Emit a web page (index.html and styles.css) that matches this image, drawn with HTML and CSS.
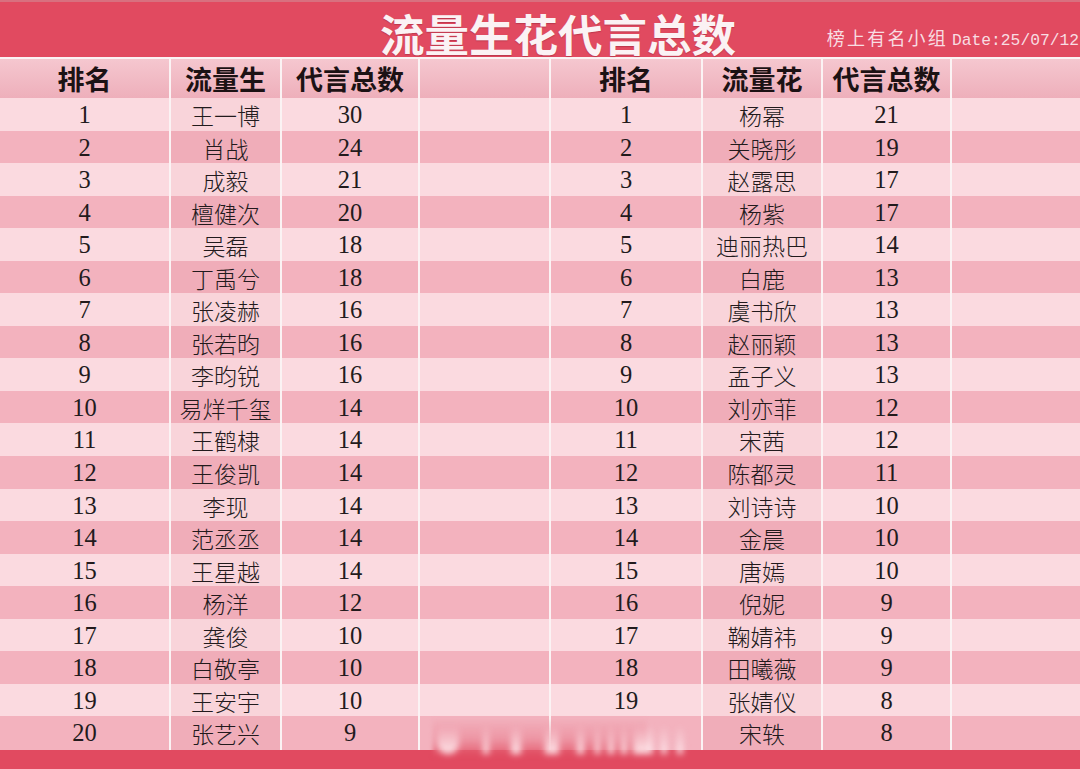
FILE: index.html
```html
<!DOCTYPE html>
<html lang="zh">
<head>
<meta charset="utf-8">
<title>流量生花代言总数</title>
<link rel="stylesheet" href="styles.css">
</head>
<body>
<div class="page">
  <header class="banner">
    <h1 class="title">流量生花代言总数</h1>
    <div class="sub"><span class="sub-cn">榜上有名小组</span> <span class="sub-date">Date:25/07/12</span></div>
  </header>
  <div class="table">
    <div class="row head">
      <div class="c">排名</div><div class="c">流量生</div><div class="c">代言总数</div><div class="c"></div>
      <div class="c">排名</div><div class="c">流量花</div><div class="c">代言总数</div><div class="c"></div>
    </div>
    <div class="row light"><div class="c">1</div><div class="c n">王一博</div><div class="c">30</div><div class="c"></div><div class="c">1</div><div class="c n">杨幂</div><div class="c">21</div><div class="c"></div></div>
    <div class="row dark"><div class="c">2</div><div class="c n">肖战</div><div class="c">24</div><div class="c"></div><div class="c">2</div><div class="c n">关晓彤</div><div class="c">19</div><div class="c"></div></div>
    <div class="row light"><div class="c">3</div><div class="c n">成毅</div><div class="c">21</div><div class="c"></div><div class="c">3</div><div class="c n">赵露思</div><div class="c">17</div><div class="c"></div></div>
    <div class="row dark"><div class="c">4</div><div class="c n">檀健次</div><div class="c">20</div><div class="c"></div><div class="c">4</div><div class="c n">杨紫</div><div class="c">17</div><div class="c"></div></div>
    <div class="row light"><div class="c">5</div><div class="c n">吴磊</div><div class="c">18</div><div class="c"></div><div class="c">5</div><div class="c n">迪丽热巴</div><div class="c">14</div><div class="c"></div></div>
    <div class="row dark"><div class="c">6</div><div class="c n">丁禹兮</div><div class="c">18</div><div class="c"></div><div class="c">6</div><div class="c n">白鹿</div><div class="c">13</div><div class="c"></div></div>
    <div class="row light"><div class="c">7</div><div class="c n">张凌赫</div><div class="c">16</div><div class="c"></div><div class="c">7</div><div class="c n">虞书欣</div><div class="c">13</div><div class="c"></div></div>
    <div class="row dark"><div class="c">8</div><div class="c n">张若昀</div><div class="c">16</div><div class="c"></div><div class="c">8</div><div class="c n">赵丽颖</div><div class="c">13</div><div class="c"></div></div>
    <div class="row light"><div class="c">9</div><div class="c n">李昀锐</div><div class="c">16</div><div class="c"></div><div class="c">9</div><div class="c n">孟子义</div><div class="c">13</div><div class="c"></div></div>
    <div class="row dark"><div class="c">10</div><div class="c n">易烊千玺</div><div class="c">14</div><div class="c"></div><div class="c">10</div><div class="c n">刘亦菲</div><div class="c">12</div><div class="c"></div></div>
    <div class="row light"><div class="c">11</div><div class="c n">王鹤棣</div><div class="c">14</div><div class="c"></div><div class="c">11</div><div class="c n">宋茜</div><div class="c">12</div><div class="c"></div></div>
    <div class="row dark"><div class="c">12</div><div class="c n">王俊凯</div><div class="c">14</div><div class="c"></div><div class="c">12</div><div class="c n">陈都灵</div><div class="c">11</div><div class="c"></div></div>
    <div class="row light"><div class="c">13</div><div class="c n">李现</div><div class="c">14</div><div class="c"></div><div class="c">13</div><div class="c n">刘诗诗</div><div class="c">10</div><div class="c"></div></div>
    <div class="row dark"><div class="c">14</div><div class="c n">范丞丞</div><div class="c">14</div><div class="c"></div><div class="c">14</div><div class="c n">金晨</div><div class="c">10</div><div class="c"></div></div>
    <div class="row light"><div class="c">15</div><div class="c n">王星越</div><div class="c">14</div><div class="c"></div><div class="c">15</div><div class="c n">唐嫣</div><div class="c">10</div><div class="c"></div></div>
    <div class="row dark"><div class="c">16</div><div class="c n">杨洋</div><div class="c">12</div><div class="c"></div><div class="c">16</div><div class="c n">倪妮</div><div class="c">9</div><div class="c"></div></div>
    <div class="row light"><div class="c">17</div><div class="c n">龚俊</div><div class="c">10</div><div class="c"></div><div class="c">17</div><div class="c n">鞠婧祎</div><div class="c">9</div><div class="c"></div></div>
    <div class="row dark"><div class="c">18</div><div class="c n">白敬亭</div><div class="c">10</div><div class="c"></div><div class="c">18</div><div class="c n">田曦薇</div><div class="c">9</div><div class="c"></div></div>
    <div class="row light"><div class="c">19</div><div class="c n">王安宇</div><div class="c">10</div><div class="c"></div><div class="c">19</div><div class="c n">张婧仪</div><div class="c">8</div><div class="c"></div></div>
    <div class="row dark"><div class="c">20</div><div class="c n">张艺兴</div><div class="c">9</div><div class="c"></div><div class="c"></div><div class="c n">宋轶</div><div class="c">8</div><div class="c"></div></div>
  </div>
  <footer class="footer"></footer>
  <div class="watermark">
    <span class="wm-bar b1"></span><span class="wm-bar b2"></span><span class="wm-bar b3"></span>
    <span class="wm-bar b4"></span><span class="wm-bar b5"></span><span class="wm-bar b6"></span>
    <span class="wm-bar b7"></span><span class="wm-bar b8"></span><span class="wm-bar b9"></span>
    <span class="wm-bar b10"></span><span class="wm-bar b11"></span>
  </div>
</div>
</body>
</html>
```

FILE: styles.css
```css
* { box-sizing: border-box; margin: 0; padding: 0; }
html, body { width: 1080px; height: 769px; overflow: hidden; background: #fff; }
body { font-family: "Liberation Serif", "Noto Sans CJK SC", serif; color: #221a1c; }

.page { position: relative; width: 1080px; height: 769px; display: flex; flex-direction: column; background: #fbf3f4; }

.banner {
  height: 57px;
  background: #e14a60;
  border-top: 2px solid #d8707f;
  display: flex;
  align-items: flex-end;
}
.title {
  margin-left: 380px;
  font-family: "Noto Sans CJK SC", sans-serif;
  font-weight: 700;
  font-size: 44.5px;
  line-height: 48px;
  color: #fbf2f4;
  text-shadow: 0 1px 1px rgba(120, 20, 40, 0.35);
  white-space: nowrap;
}
.sub {
  margin-left: auto;
  padding-bottom: 5px;
  padding-right: 1px;
  color: #f8dde2;
  white-space: nowrap;
  line-height: 22px;
}
.sub-cn { font-family: "Noto Sans CJK SC", sans-serif; letter-spacing: 2.2px; font-size: 18px; }
.sub-date { font-family: "Liberation Mono", monospace; font-size: 16.3px; }

.table {
  margin-top: 2px;
  display: flex;
  flex-direction: column;
  gap: 2px;
  background: #fbf3f4;
}
.row {
  display: grid;
  grid-template-columns: 169px 109px 136px 129px 150px 118px 127px 128px;
  column-gap: 2px;
  height: 30.55px;
}
.row.head { height: 37px; }
.c {
  display: flex;
  align-items: center;
  justify-content: center;
  font-size: 24.5px;
  white-space: nowrap;
}
.c.n { font-family: "Noto Sans CJK SC", sans-serif; font-size: 23px; font-weight: 300; }

.head .c {
  background: linear-gradient(#f5c7cf, #eeafbb);
  font-family: "Noto Sans CJK SC", sans-serif;
  font-weight: 700;
  font-size: 27px;
  color: #1c1214;
}
.light .c { background: #fbdae0; }
.light .c.n { background: #f9d4da; }
.dark .c { background: #f3b2be; }
.dark .c.n { background: #f0adb9; }

.footer {
  margin-top: 3px;
  flex: 1;
  background: #e14a60;
}

.watermark {
  position: absolute;
  left: 433px;
  top: 718px;
  width: 214px;
  height: 38px;
  background: linear-gradient(to bottom, rgba(240,170,182,0) 0%, rgba(233,130,146,0.6) 55%, rgba(225,78,98,0.85) 100%);
  filter: blur(2px);
}
.wm-bar {
  position: absolute;
  top: 8px;
  height: 28px;
  background: linear-gradient(to bottom, rgba(255,255,255,0), rgba(253,228,233,0.8) 70%, rgba(255,245,247,0.9));
  filter: blur(2.5px);
}
.b1 { left: 4px; width: 22px; border-radius: 0 0 11px 11px; }
.b2 { left: 50px; width: 6px; }
.b3 { left: 78px; width: 10px; }
.b4 { left: 112px; width: 14px; }
.b5 { left: 144px; width: 7px; }
.b6 { left: 162px; width: 5px; }
.b7 { left: 175px; width: 6px; }
.b8 { left: 188px; width: 6px; }
.b9 { left: 200px; width: 20px; }
.b10 { left: 228px; width: 6px; }
.b11 { left: 244px; width: 6px; }
```
